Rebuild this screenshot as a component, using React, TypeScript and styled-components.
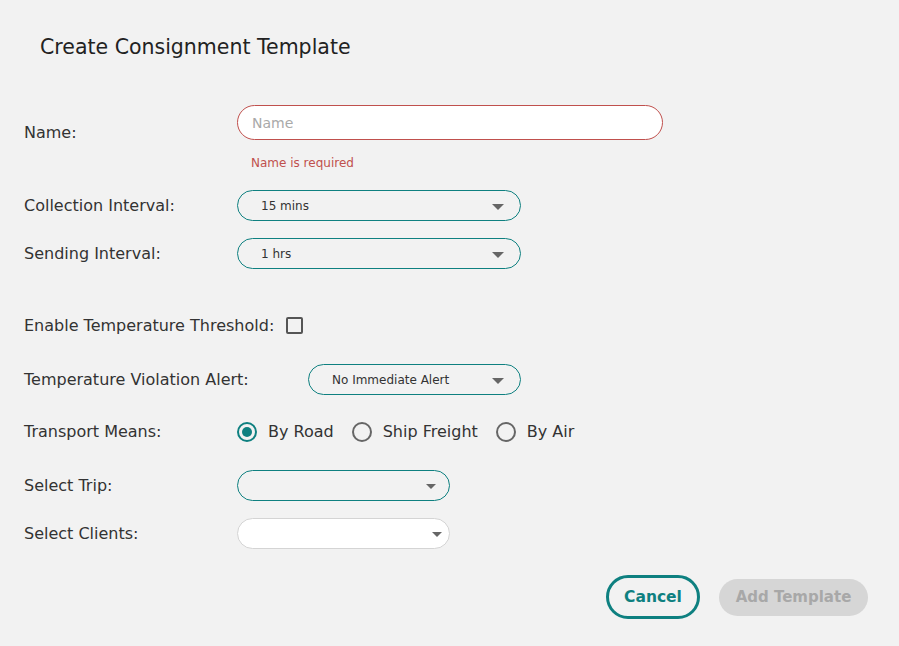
import React, { useState } from 'react';
import styled, { createGlobalStyle } from 'styled-components';

const GlobalStyle = createGlobalStyle`
	html, body {
		margin: 0;
		padding: 0;
		background: #f2f2f2;
	}
	body {
		font-family: 'DejaVu Sans', 'Open Sans', sans-serif;
		color: #333;
	}
`;

const TEAL = '#0e8080';

const Page = styled.div`
	width: 899px;
	height: 646px;
	box-sizing: border-box;
	padding: 0 31px 0 24px;
	display: flex;
	flex-direction: column;
`;

const Title = styled.h2`
	margin: 34px 0 0 16px;
	font-size: 20.5px;
	font-weight: 400;
	color: #222;
	line-height: 27px;
`;

const Form = styled.div`
	display: flex;
	flex-direction: column;
	margin-top: 44px;
`;

const Row = styled.div<{ $mt?: number; $labelWidth?: number; $top?: boolean }>`
	display: grid;
	grid-template-columns: ${(p) => p.$labelWidth ?? 213}px auto;
	align-items: ${(p) => (p.$top ? 'start' : 'center')};
	margin-top: ${(p) => p.$mt ?? 0}px;
	min-height: 31px;
`;

const Label = styled.label<{ $offset?: number }>`
	font-size: 16px;
	line-height: 22px;
	color: #333;
	margin-top: ${(p) => p.$offset ?? 0}px;
`;

const NameBlock = styled.div`
	display: flex;
	flex-direction: column;
`;

const TextInput = styled.input<{ $invalid?: boolean }>`
	width: 426px;
	height: 35px;
	box-sizing: border-box;
	border-radius: 18px;
	border: 1px solid ${(p) => (p.$invalid ? '#c0504d' : TEAL)};
	background: #fff;
	padding: 0 14px;
	font-family: inherit;
	font-size: 14px;
	outline: none;
	&::placeholder {
		color: #a9a9a9;
	}
`;

const ErrorText = styled.div`
	margin: 15px 0 0 14px;
	font-size: 12px;
	line-height: 16px;
	color: #c0504d;
`;

const SelectBox = styled.div<{
	$width: number;
	$muted?: boolean;
	$textLeft?: number;
	$caretRight?: number;
}>`
	width: ${(p) => p.$width}px;
	height: 31px;
	box-sizing: border-box;
	border-radius: 16px;
	border: 1px solid ${(p) => (p.$muted ? '#d4d4d4' : TEAL)};
	background: ${(p) => (p.$muted ? '#fff' : 'transparent')};
	display: flex;
	align-items: center;
	justify-content: space-between;
	padding: 0 ${(p) => p.$caretRight ?? 16}px 0 ${(p) => p.$textLeft ?? 23}px;
	font-size: 12px;
	color: #333;
`;

const Caret = styled.span<{ $small?: boolean }>`
	width: 0;
	height: 0;
	border-left: ${(p) => (p.$small ? 5 : 6)}px solid transparent;
	border-right: ${(p) => (p.$small ? 5 : 6)}px solid transparent;
	border-top: ${(p) => (p.$small ? 5 : 6)}px solid #666;
	margin-top: 2px;
`;

const CheckRow = styled.div<{ $mt?: number }>`
	display: flex;
	align-items: center;
	gap: 12px;
	height: 31px;
	margin-top: ${(p) => p.$mt ?? 0}px;
	font-size: 16px;
	color: #333;
`;

const CheckBox = styled.span`
	width: 17px;
	height: 17px;
	box-sizing: border-box;
	border: 2px solid #555;
	border-radius: 2px;
	display: inline-block;
`;

const RadioGroup = styled.div`
	display: flex;
	align-items: center;
	gap: 18px;
`;

const RadioOption = styled.label`
	display: flex;
	align-items: center;
	gap: 11px;
	font-size: 16px;
	color: #333;
	cursor: pointer;
`;

const RadioCircle = styled.span<{ $checked?: boolean }>`
	width: 20px;
	height: 20px;
	box-sizing: border-box;
	border-radius: 50%;
	border: 2px solid ${(p) => (p.$checked ? TEAL : '#666')};
	display: flex;
	align-items: center;
	justify-content: center;
	&::after {
		content: '';
		width: 10px;
		height: 10px;
		border-radius: 50%;
		background: ${(p) => (p.$checked ? TEAL : 'transparent')};
	}
`;

const Actions = styled.div`
	display: flex;
	justify-content: flex-end;
	align-items: center;
	gap: 19px;
	margin-top: 26px;
`;

const CancelButton = styled.button`
	width: 94px;
	height: 44px;
	border-radius: 22px;
	border: 3px solid ${TEAL};
	background: transparent;
	color: ${TEAL};
	font-family: inherit;
	font-weight: 700;
	font-size: 15.5px;
	padding: 0;
	cursor: pointer;
`;

const AddButton = styled.button`
	width: 149px;
	height: 37px;
	border-radius: 19px;
	border: none;
	background: #d6d6d6;
	color: #a8a8a8;
	font-family: inherit;
	font-weight: 700;
	font-size: 15px;
	padding: 0;
`;

const means = ['By Road', 'Ship Freight', 'By Air'];

export default function App() {
	const [transport, setTransport] = useState('By Road');

	return (
		<Page>
			<GlobalStyle />
			<Title>Create Consignment Template</Title>
			<Form>
				<Row $top>
					<Label $offset={17}>Name:</Label>
					<NameBlock>
						<TextInput $invalid placeholder='Name' />
						<ErrorText>Name is required</ErrorText>
					</NameBlock>
				</Row>
				<Row $mt={19}>
					<Label>Collection Interval:</Label>
					<SelectBox $width={284}>
						15 mins
						<Caret />
					</SelectBox>
				</Row>
				<Row $mt={17}>
					<Label>Sending Interval:</Label>
					<SelectBox $width={284}>
						1 hrs
						<Caret />
					</SelectBox>
				</Row>
				<CheckRow $mt={41}>
					Enable Temperature Threshold:
					<CheckBox />
				</CheckRow>
				<Row $mt={23} $labelWidth={284}>
					<Label>Temperature Violation Alert:</Label>
					<SelectBox $width={213}>
						No Immediate Alert
						<Caret />
					</SelectBox>
				</Row>
				<Row $mt={21}>
					<Label>Transport Means:</Label>
					<RadioGroup>
						{means.map((m) => (
							<RadioOption key={m} onClick={() => setTransport(m)}>
								<RadioCircle $checked={transport === m} />
								{m}
							</RadioOption>
						))}
					</RadioGroup>
				</Row>
				<Row $mt={23}>
					<Label>Select Trip:</Label>
					<SelectBox $width={213} $textLeft={16} $caretRight={13}>
						<span />
						<Caret $small />
					</SelectBox>
				</Row>
				<Row $mt={17}>
					<Label>Select Clients:</Label>
					<SelectBox $width={213} $muted $textLeft={16} $caretRight={7}>
						<span />
						<Caret $small />
					</SelectBox>
				</Row>
			</Form>
			<Actions>
				<CancelButton>Cancel</CancelButton>
				<AddButton>Add Template</AddButton>
			</Actions>
		</Page>
	);
}
